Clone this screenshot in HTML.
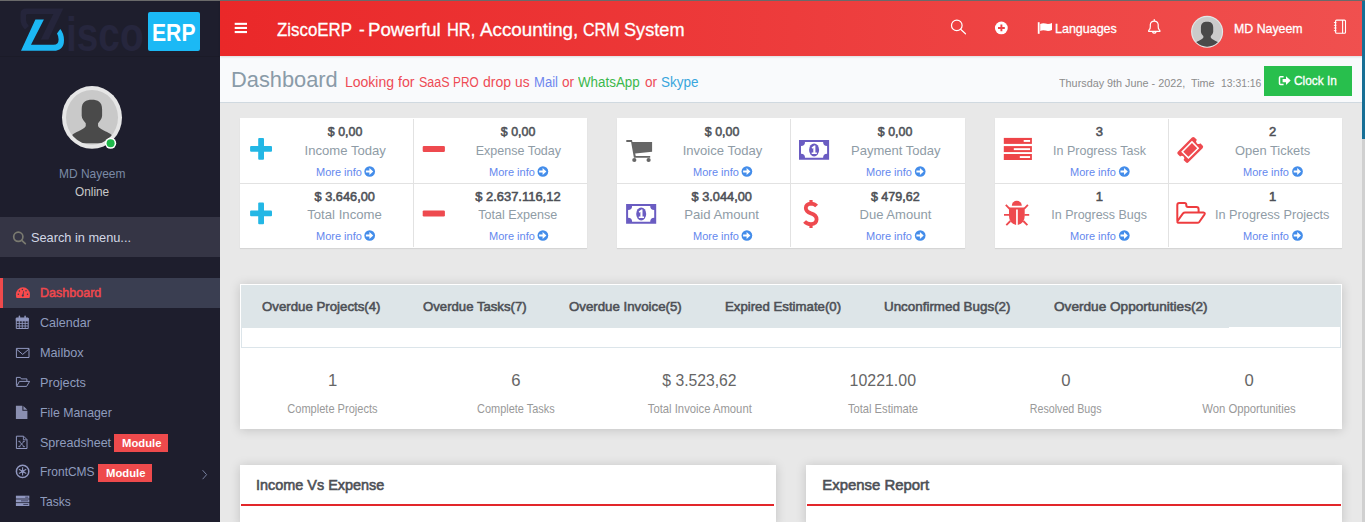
<!DOCTYPE html>
<html lang="en"><head><meta charset="utf-8"><title>ZiscoERP - Dashboard</title>
<style>
html,body{margin:0;padding:0}
body{width:1365px;height:522px;overflow:hidden;position:relative;background:#e8e8e8;font-family:"Liberation Sans",sans-serif}
.a{position:absolute}
.t{position:absolute;white-space:pre;line-height:1;font-family:"Liberation Sans",sans-serif}
svg{position:absolute;overflow:visible}
.card{background:#fff;box-shadow:0 1px 1px rgba(0,0,0,.08)}

</style></head>
<body>
<!-- layout blocks -->
<div class="a" style="left:0;top:0;width:220px;height:522px;background:#1e1e2d"></div>
<div class="a" style="left:0;top:56px;width:220px;height:1px;background:#1b1b28"></div>
<div class="a" style="left:220px;top:56px;width:1145px;height:46px;background:#f9fafc;border-bottom:1px solid #d0d9e0"></div>
<div class="a" style="left:220px;top:0;width:1145px;height:56px;background:linear-gradient(90deg,#ea2829 0%,#f0504f 100%);box-shadow:0 1px 2px rgba(0,0,0,.12)"></div>
<!-- sidebar -->
<div class="a" style="left:148px;top:12px;width:52px;height:38.5px;background:#1bb9f5;border-radius:2px"></div>
<div class="a" style="left:0;top:217px;width:220px;height:40px;background:#353545"></div>
<div class="a" style="left:0;top:278px;width:217px;height:30px;background:#3a3e51;border-left:3px solid #ee4a4c"></div>
<div class="a" style="left:114px;top:434px;width:54px;height:18px;background:#ee4a4c"></div>
<div class="a" style="left:98px;top:464px;width:54px;height:18px;background:#ee4a4c"></div>
<!-- cards -->
<div class="a card" style="left:240px;top:118px;width:347.3px;height:130px"></div>
<div class="a card" style="left:617.3px;top:118px;width:347.3px;height:130px"></div>
<div class="a card" style="left:994.7px;top:118px;width:347.3px;height:130px"></div>
<!-- tabs panel -->
<div class="a" style="left:240px;top:284px;width:1102px;height:145px;background:#fff;box-shadow:0 1px 10px rgba(0,0,0,.17)"></div>
<div class="a" style="left:241px;top:285px;width:1100px;height:42px;background:#dde5e8"></div>
<div class="a" style="left:241px;top:327px;width:988px;height:1px;background:#dde5e8"></div>
<div class="a" style="left:241px;top:327px;width:1098px;height:20px;border:1px solid #dce5ea;border-top:none"></div>
<!-- bottom panels -->
<div class="a" style="left:240px;top:465px;width:535.5px;height:60px;background:#fff;box-shadow:0 1px 10px rgba(0,0,0,.17)"></div>
<div class="a" style="left:241px;top:504px;width:533.3px;height:2px;background:#e2262a"></div>
<div class="a" style="left:805.5px;top:465px;width:536.5px;height:60px;background:#fff;box-shadow:0 1px 10px rgba(0,0,0,.17)"></div>
<div class="a" style="left:806.5px;top:504px;width:534.3px;height:2px;background:#e2262a"></div>
<!-- clock in -->
<div class="a" style="left:1264px;top:66px;width:88px;height:30px;background:#28bf4d"></div>
<!-- scrollbar -->
<div class="a" style="left:1362px;top:0;width:3px;height:522px;background:#d0d0d0"></div>
<div class="a" style="left:1362px;top:0;width:3px;height:139px;background:#176f96"></div>

<!-- card dividers -->
<div class="a" style="left:413.0px;top:119px;width:1px;height:128px;background:#e2e2e2"></div>
<div class="a" style="left:240.0px;top:183px;width:347.3px;height:1px;background:#e2e2e2"></div>
<div class="a" style="left:790.3px;top:119px;width:1px;height:128px;background:#e2e2e2"></div>
<div class="a" style="left:617.3px;top:183px;width:347.3px;height:1px;background:#e2e2e2"></div>
<div class="a" style="left:1167.7px;top:119px;width:1px;height:128px;background:#e2e2e2"></div>
<div class="a" style="left:994.7px;top:183px;width:347.3px;height:1px;background:#e2e2e2"></div>
<svg class="a" style="left:0;top:0" width="1365" height="522" viewBox="0 0 1365 522">
<!-- ===== logo Z ===== -->
<path d="M26 8.5 H63.3 L48.4 39.4 H40.9 L53.3 14 H27.5 Q26 14 26 15.5 V20 Q26 23 28.9 25.9 L25 29.4 Q20.5 25 20.5 20 V14 Q20.5 8.5 26 8.5 Z" fill="#25253b"/>
<path d="M35.4 19.4 H43.9 L31 44.8 H53.5 Q58.6 44.8 58.6 39.5 Q58.6 36 57 33.5 L60.3 28.9 Q64 33.5 64 40 Q64 50.8 53.5 50.8 H21 Z" fill="#1cb8f5"/>
<!-- ===== sidebar avatar ===== -->
<ellipse cx="92" cy="117.4" rx="30" ry="31.4" fill="#e6e6e6"/>
<ellipse cx="92" cy="117.4" rx="26" ry="27.4" fill="#c9c9c9"/>
<clipPath id="avc"><ellipse cx="92" cy="117.4" rx="26" ry="27.4"/></clipPath>
<g clip-path="url(#avc)" fill="#4a4a4a"><path transform="translate(91.9 99.7) scale(1.66)" d="M-6.15 5.7 C-6.15 1.2 -3.5 0 0 0 C3.5 0 6.15 1.2 6.15 5.7 L6.15 9.7 C6.15 11.7 4.5 13.2 3.7 14.2 L3.7 15.8 C4.5 17.7 9 19.2 11 20.5 C13 21.7 14 24.2 14.5 26.2 L-14.5 26.2 C-14 24.2 -13 21.7 -11 20.5 C-9 19.2 -4.5 17.7 -3.7 15.8 L-3.7 14.2 C-4.5 13.2 -6.15 11.7 -6.15 9.7 Z"/></g>
<circle cx="110.6" cy="143.2" r="5.6" fill="#ffffff"/>
<circle cx="110.6" cy="143.2" r="4" fill="#1fb84a"/>
<!-- search icon (sidebar) -->
<g fill="none" stroke="#7a7a70" stroke-width="1.7" stroke-linecap="round">
  <circle cx="18.3" cy="236.8" r="4.6"/>
  <path d="M21.7 240.3 L25.3 243.6"/>
</g>
<!-- ===== sidebar menu icons ===== -->
<!-- dashboard -->
<g>
  <path d="M16.6 298.1 Q15.9 296.6 15.9 294.4 A7.05 7.05 0 0 1 30 294.4 Q30 296.6 29.3 298.1 Z" fill="#f94a4c"/>
  <g fill="#383d4f">
    <circle cx="22.4" cy="289.6" r=".75"/><circle cx="19.4" cy="291" r=".75"/><circle cx="26" cy="290.8" r=".75"/>
    <circle cx="18.3" cy="294.3" r=".75"/><circle cx="27.5" cy="294.3" r=".75"/>
    <circle cx="22.8" cy="295.6" r="1.1"/>
    <path d="M22.5 295 L23.3 291 L23.9 291.1 L23.4 295.2 Z"/>
  </g>
</g>
<g fill="none" stroke="#9097bf" stroke-width="1">
  <!-- calendar -->
  <path d="M16.3 318.2 H28.2 V328.5 H16.3 Z"/>
  <path d="M16.3 320.8 H28.2 M16.3 323.4 H28.2 M16.3 326 H28.2 M19.3 320.8 V328.5 M22.25 320.8 V328.5 M25.2 320.8 V328.5" stroke-width=".9"/>
  <path d="M16.3 318.2 H28.2 V320.6 H16.3 Z" fill="#9097bf"/>
  <path d="M19.4 316.2 V319 M25.1 316.2 V319" stroke-width="1.5" stroke-linecap="round"/>
  <!-- mailbox -->
  <path d="M16.4 348.4 H29 V357.5 H16.4 Z"/>
  <path d="M16.6 349.2 L22.7 354.4 L28.8 349.2"/>
  <!-- projects (folder open o) -->
  <path d="M16.4 385.8 V377.4 H20.3 L21.3 378.9 H26.9 V381"/>
  <path d="M16.6 386.4 L19.4 381.4 H29.6 L26.6 386.4 Z"/>
  <!-- spreadsheet (file-excel-o) -->
  <path d="M16.4 436.2 H23.6 L27 439.6 V448.5 H16.4 Z"/>
  <path d="M23.4 436.4 V439.8 H26.8" stroke-width=".9"/>
  <path d="M19.2 441.4 L24 446.6 M24 441.4 L19.2 446.6 M18.4 441.3 H20.4 M22.8 441.3 H24.8 M18.4 446.7 H20.4 M22.8 446.7 H24.8" stroke-width=".9"/>
  <!-- frontcms (empire) -->
  <circle cx="22.6" cy="471.4" r="6.2" stroke-width="1.5"/>
  <path d="M22.6 467.2 V475.6 M18.95 469.3 L26.25 473.5 M18.95 473.5 L26.25 469.3" stroke-width="1.1"/>
  <!-- chevron -->
  <path d="M202.6 470.2 L206.6 474.7 L202.6 479.2" stroke="#77809f" stroke-width="1"/>
</g>
<circle cx="22.6" cy="471.4" r="1.6" fill="#9097bf"/>
<!-- file manager (filled file) -->
<path d="M15.9 405.8 H22.4 V410.8 H27.4 V418.9 H15.9 Z M23.4 405.9 L27.3 409.8 H23.4 Z" fill="#8a8fb0"/>
<!-- tasks -->
<g fill="#9097bf">
  <rect x="15.9" y="495.7" width="13.4" height="2.9"/>
  <rect x="15.9" y="499.4" width="13.4" height="2.9"/>
  <rect x="15.9" y="503.1" width="13.4" height="2.9"/>
</g>
<g fill="#3a3d5c">
  <rect x="25.2" y="496.7" width="3" height=".9"/>
  <rect x="21" y="500.4" width="7.2" height=".9"/>
  <rect x="23.3" y="504.1" width="4.9" height=".9"/>
</g>
<!-- ===== top bar icons ===== -->
<g fill="#ffffff">
  <rect x="234.7" y="22.8" width="12.3" height="2.1"/>
  <rect x="234.7" y="26.9" width="12.3" height="2.1"/>
  <rect x="234.7" y="31" width="12.3" height="2.1"/>
</g>
<g fill="none" stroke="#ffffff" stroke-width="1.2" stroke-linecap="round">
  <circle cx="956.8" cy="25.4" r="5.3"/>
  <path d="M960.6 29.3 L965.5 33.8"/>
</g>
<circle cx="1001.35" cy="27.95" r="6.4" fill="#ffffff"/>
<path d="M998 27.95 H1004.8 M1001.4 24.6 V31.3" stroke="#ee4245" stroke-width="1.9"/>
<!-- flag -->
<path d="M1037.8 22.2 H1039.6 V33.8 H1037.8 Z" fill="#ffffff"/>
<path d="M1040.2 23.9 Q1043 22.6 1045.5 23.6 Q1048.5 24.8 1052 23 V30 Q1048.5 31.8 1045.5 30.6 Q1043 29.6 1040.2 30.9 Z" fill="#ffffff"/>
<!-- bell -->
<g fill="none" stroke="#ffffff" stroke-width="1.2" stroke-linejoin="round" stroke-linecap="round">
  <path d="M1148.6 31.3 H1160 Q1160 30.2 1159 29.4 Q1158.2 28.6 1158.2 26.5 V24.5 A4 4 0 0 0 1150.3 24.5 V26.5 Q1150.3 28.6 1149.5 29.4 Q1148.6 30.2 1148.6 31.3 Z"/>
  <path d="M1152.6 32 A1.8 1.8 0 0 0 1156 32"/>
  <path d="M1154.3 19.6 V20.4"/>
</g>
<!-- top avatar -->
<circle cx="1207.1" cy="31.8" r="16" fill="#e3e8e8"/>
<circle cx="1207.1" cy="31.8" r="14.9" fill="#cbcbcb"/>
<clipPath id="avt"><circle cx="1207.1" cy="31.8" r="14.9"/></clipPath>
<g clip-path="url(#avt)" fill="#4a4a4a"><path transform="translate(1207.07 21.8)" d="M-6.15 5.7 C-6.15 1.2 -3.5 0 0 0 C3.5 0 6.15 1.2 6.15 5.7 L6.15 9.7 C6.15 11.7 4.5 13.2 3.7 14.2 L3.7 15.8 C4.5 17.7 9 19.2 11 20.5 C13 21.7 14 24.2 14.5 26.2 L-14.5 26.2 C-14 24.2 -13 21.7 -11 20.5 C-9 19.2 -4.5 17.7 -3.7 15.8 L-3.7 14.2 C-4.5 13.2 -6.15 11.7 -6.15 9.7 Z"/></g>
<!-- notebook -->
<g fill="none" stroke="#ffffff" stroke-width="1.1">
  <rect x="1335.6" y="20.1" width="9.9" height="13.1" rx="1"/>
  <path d="M1342.6 20.1 V33.2"/>
  <path d="M1333.9 22.6 H1336.4 M1333.9 25.3 H1336.4 M1333.9 28 H1336.4 M1333.9 30.7 H1336.4" stroke-width="1"/>
</g>
<!-- clock-in icon (sign-out) -->
<g fill="none" stroke="#ffffff" stroke-width="1.5">
  <path d="M1283.6 76.8 H1280.4 Q1279.5 76.8 1279.5 77.7 V83.5 Q1279.5 84.4 1280.4 84.4 H1283.6"/>
</g>
<path d="M1282.6 79 H1286 V76.3 L1290.7 80.6 L1286 84.9 V82.2 H1282.6 Z" fill="#ffffff"/>
<!-- ===== card icons ===== -->
<g fill="#23b7e5">
  <rect x="250.1" y="145.9" width="21.9" height="5.9" rx="1"/><rect x="258.2" y="138" width="5.8" height="21.8" rx="1"/>
  <rect x="250.1" y="210.4" width="21.9" height="5.9" rx="1"/><rect x="258.2" y="202.5" width="5.8" height="21.8" rx="1"/>
</g>
<g fill="#ee4a4f">
  <rect x="422.7" y="145.9" width="22.2" height="6.1" rx="1.2"/>
  <rect x="422.7" y="210.4" width="22.2" height="6.1" rx="1.2"/>
</g>
<!-- cart -->
<g fill="#666666">
  <path d="M626.3 140.1 H632 L632.4 142.1 H652.1 V151.8 L635.2 153.6 L635.7 156 H650.2 V157.8 H633.9 L631.1 142 H626.3 Z"/>
  <circle cx="634.3" cy="160" r="2.1"/><circle cx="648.6" cy="160" r="2.1"/>
</g>
<!-- money x2 -->
<g>
  <path fill="#6a5cc2" fill-rule="evenodd" d="M799 140 H829.1 V159.7 H799 Z M805 142 A4 4 0 0 1 801 146 V153.7 A4 4 0 0 1 805 157.7 H823.1 A4 4 0 0 1 827.1 153.7 V146 A4 4 0 0 1 823.1 142 Z"/>
  <ellipse cx="814.1" cy="149.9" rx="5" ry="6.5" fill="#6a5cc2"/>
  <path d="M811.6 147.5 L814.2 145.6 H815.4 V152.5 H816.9 V153.9 H811.7 V152.5 H813.3 V147.9 L812.2 148.7 Z" fill="#ffffff"/>
</g>
<g transform="translate(-172.9 64)">
  <path fill="#6a5cc2" fill-rule="evenodd" d="M799 140 H829.1 V159.7 H799 Z M805 142 A4 4 0 0 1 801 146 V153.7 A4 4 0 0 1 805 157.7 H823.1 A4 4 0 0 1 827.1 153.7 V146 A4 4 0 0 1 823.1 142 Z"/>
  <ellipse cx="814.1" cy="149.9" rx="5" ry="6.5" fill="#6a5cc2"/>
  <path d="M811.6 147.5 L814.2 145.6 H815.4 V152.5 H816.9 V153.9 H811.7 V152.5 H813.3 V147.9 L812.2 148.7 Z" fill="#ffffff"/>
</g>
<!-- dollar -->
<g fill="none" stroke="#ee4a4f" stroke-linecap="butt">
  <path d="M816.6 206 Q814.5 203.6 811 203.6 Q806 203.8 805.8 208 Q805.8 211.6 811 213.4 Q816.6 215.2 816.6 219.4 Q816.4 224 811 224.2 Q807 224.2 804.6 221.4" stroke-width="3.8"/>
  <path d="M811 200 V204 M811 223.8 V227.9" stroke-width="3.2"/>
</g>
<!-- tasks (card) -->
<g fill="#ee4448">
  <rect x="1003.8" y="137.9" width="28.1" height="6"/><rect x="1003.8" y="146.1" width="28.1" height="6"/><rect x="1003.8" y="154" width="28.1" height="6"/>
</g>
<g fill="#ffffff">
  <rect x="1023.7" y="140" width="6.4" height="1.9"/><rect x="1013.8" y="148.2" width="16.3" height="1.9"/><rect x="1019.8" y="156.1" width="10.3" height="1.9"/>
</g>
<!-- ticket -->
<g transform="translate(1190.2 149.9) rotate(-45)">
  <path fill="#ee4a4f" d="M-10 -7.5 H10 Q11.8 -7.5 11.8 -5.7 V-2.4 A2.4 2.4 0 0 0 11.8 2.4 V5.7 Q11.8 7.5 10 7.5 H-10 Q-11.8 7.5 -11.8 5.7 V2.4 A2.4 2.4 0 0 0 -11.8 -2.4 V-5.7 Q-11.8 -7.5 -10 -7.5 Z"/>
  <rect x="-6.9" y="-4.4" width="13.8" height="8.8" fill="none" stroke="#ffffff" stroke-width="1.5"/>
</g>
<!-- bug -->
<g fill="#ee4a4f">
  <path d="M1011.8 205.8 A5 5 0 0 1 1021.8 205.8 Z"/>
  <path d="M1009 207.5 H1024.7 V216 Q1024.7 223 1017.8 225 V209.5 H1016.1 V225 Q1009 223 1009 216 Z"/>
</g>
<g stroke="#ee4a4f" stroke-width="1.8" fill="none">
  <path d="M1005.8 204.8 L1009.6 208.8 M1004 214.8 H1009.4 M1006.3 225.2 L1010.4 221 M1027.9 204.8 L1024.1 208.8 M1029.2 214.8 H1024.3 M1027.4 225.2 L1023.3 221"/>
</g>
<!-- folder open (card) -->
<g fill="none" stroke="#ee3c3f" stroke-width="2" stroke-linejoin="round">
  <path d="M1177.3 220.8 V205 Q1177.3 203 1179.3 203 H1184.6 Q1186.3 203 1186.3 204.8 V205.3 Q1186.3 207 1188 207 H1196.4 Q1198.6 207 1198.6 209.2 V212"/>
  <path d="M1178.6 222.8 Q1176.6 222.6 1177.8 220.6 L1183 213.4 Q1183.8 212.4 1185 212.4 H1203.4 Q1205.6 212.6 1204.4 214.6 L1199.4 221.8 Q1198.6 222.8 1197.4 222.8 Z"/>
</g>
<!-- more info arrows -->
<g>
  <circle cx="369.7" cy="171.5" r="5.35" fill="#448dea"/>
  <path d="M365.9 170.55 H369.4 V168.1 L373.2 171.5 L369.4 174.9 V172.45 H365.9 Z" fill="#ffffff"/>
</g>
<g transform="translate(0 64)">
  <circle cx="369.7" cy="171.5" r="5.35" fill="#448dea"/>
  <path d="M365.9 170.55 H369.4 V168.1 L373.2 171.5 L369.4 174.9 V172.45 H365.9 Z" fill="#ffffff"/>
</g>
<g transform="translate(173.2 0)">
  <circle cx="369.7" cy="171.5" r="5.35" fill="#448dea"/>
  <path d="M365.9 170.55 H369.4 V168.1 L373.2 171.5 L369.4 174.9 V172.45 H365.9 Z" fill="#ffffff"/>
</g><g transform="translate(173.2 64)">
  <circle cx="369.7" cy="171.5" r="5.35" fill="#448dea"/>
  <path d="M365.9 170.55 H369.4 V168.1 L373.2 171.5 L369.4 174.9 V172.45 H365.9 Z" fill="#ffffff"/>
</g>
<g transform="translate(377.2 0)">
  <circle cx="369.7" cy="171.5" r="5.35" fill="#448dea"/>
  <path d="M365.9 170.55 H369.4 V168.1 L373.2 171.5 L369.4 174.9 V172.45 H365.9 Z" fill="#ffffff"/>
</g><g transform="translate(377.2 64)">
  <circle cx="369.7" cy="171.5" r="5.35" fill="#448dea"/>
  <path d="M365.9 170.55 H369.4 V168.1 L373.2 171.5 L369.4 174.9 V172.45 H365.9 Z" fill="#ffffff"/>
</g>
<g transform="translate(550.5 0)">
  <circle cx="369.7" cy="171.5" r="5.35" fill="#448dea"/>
  <path d="M365.9 170.55 H369.4 V168.1 L373.2 171.5 L369.4 174.9 V172.45 H365.9 Z" fill="#ffffff"/>
</g><g transform="translate(550.5 64)">
  <circle cx="369.7" cy="171.5" r="5.35" fill="#448dea"/>
  <path d="M365.9 170.55 H369.4 V168.1 L373.2 171.5 L369.4 174.9 V172.45 H365.9 Z" fill="#ffffff"/>
</g>
<g transform="translate(754.6 0)">
  <circle cx="369.7" cy="171.5" r="5.35" fill="#448dea"/>
  <path d="M365.9 170.55 H369.4 V168.1 L373.2 171.5 L369.4 174.9 V172.45 H365.9 Z" fill="#ffffff"/>
</g><g transform="translate(754.6 64)">
  <circle cx="369.7" cy="171.5" r="5.35" fill="#448dea"/>
  <path d="M365.9 170.55 H369.4 V168.1 L373.2 171.5 L369.4 174.9 V172.45 H365.9 Z" fill="#ffffff"/>
</g>
<g transform="translate(927.8 0)">
  <circle cx="369.7" cy="171.5" r="5.35" fill="#448dea"/>
  <path d="M365.9 170.55 H369.4 V168.1 L373.2 171.5 L369.4 174.9 V172.45 H365.9 Z" fill="#ffffff"/>
</g><g transform="translate(927.8 64)">
  <circle cx="369.7" cy="171.5" r="5.35" fill="#448dea"/>
  <path d="M365.9 170.55 H369.4 V168.1 L373.2 171.5 L369.4 174.9 V172.45 H365.9 Z" fill="#ffffff"/>
</g>
</svg>

<div class="a" style="left:0;top:0;width:1365px;height:1px;background:#6a6a6a"></div>


<div id="txt">
<span class="t" style="left:66.30px;top:11px;font-size:48px;color:#26263d;font-weight:700;transform:scaleX(0.8079);transform-origin:0 0;">isco</span>
<span class="t" style="left:152.30px;top:21px;font-size:24px;color:#ffffff;font-weight:700;transform:scaleX(0.8813);transform-origin:0 0;">ERP</span>
<span class="t" style="left:58.80px;top:167px;font-size:13px;color:#7b8aa5;transform:scaleX(0.9204);transform-origin:0 0;">MD Nayeem</span>
<span class="t" style="left:75.20px;top:186px;font-size:12.1px;color:#c9c9c9;transform:scaleX(0.9780);transform-origin:0 0;">Online</span>
<span class="t" style="left:31.40px;top:231px;font-size:13.5px;color:#d3d8e6;transform:scaleX(0.9451);transform-origin:0 0;">Search in menu...</span>
<span class="t" style="left:40.10px;top:286px;font-size:13px;color:#f0484d;-webkit-text-stroke:0.5px #f0484d;transform:scaleX(0.9637);transform-origin:0 0;">Dashboard</span>
<span class="t" style="left:39.80px;top:316px;font-size:13px;color:#8f9cbd;transform:scaleX(0.9646);transform-origin:0 0;">Calendar</span>
<span class="t" style="left:39.80px;top:346px;font-size:13px;color:#8f9cbd;transform:scaleX(0.9755);transform-origin:0 0;">Mailbox</span>
<span class="t" style="left:39.80px;top:376px;font-size:13px;color:#8f9cbd;transform:scaleX(0.9772);transform-origin:0 0;">Projects</span>
<span class="t" style="left:39.80px;top:406px;font-size:13px;color:#8f9cbd;transform:scaleX(0.9463);transform-origin:0 0;">File Manager</span>
<span class="t" style="left:39.80px;top:436px;font-size:13px;color:#8f9cbd;transform:scaleX(0.9643);transform-origin:0 0;">Spreadsheet</span>
<span class="t" style="left:39.80px;top:465px;font-size:13px;color:#8f9cbd;transform:scaleX(0.9218);transform-origin:0 0;">FrontCMS</span>
<span class="t" style="left:39.80px;top:495px;font-size:13px;color:#8f9cbd;transform:scaleX(0.9268);transform-origin:0 0;">Tasks</span>
<span class="t" style="left:121.70px;top:438px;font-size:11.2px;color:#ffffff;font-weight:700;transform:scaleX(1.0062);transform-origin:0 0;">Module</span>
<span class="t" style="left:105.50px;top:468px;font-size:11.2px;color:#ffffff;font-weight:700;transform:scaleX(1.0062);transform-origin:0 0;">Module</span>
<span class="t" style="left:277.30px;top:21px;font-size:18.6px;color:#ffffff;-webkit-text-stroke:0.3px #ffffff;transform:scaleX(0.9074);transform-origin:0 0;">ZiscoERP</span>
<span class="t" style="left:358.60px;top:21px;font-size:18.6px;color:#ffffff;-webkit-text-stroke:0.3px #ffffff;transform:scaleX(0.9189);transform-origin:0 0;">-</span>
<span class="t" style="left:368.30px;top:21px;font-size:18.6px;color:#ffffff;-webkit-text-stroke:0.3px #ffffff;transform:scaleX(1.0049);transform-origin:0 0;">Powerful</span>
<span class="t" style="left:446.70px;top:21px;font-size:18.6px;color:#ffffff;-webkit-text-stroke:0.3px #ffffff;transform:scaleX(0.8835);transform-origin:0 0;">HR,</span>
<span class="t" style="left:480.00px;top:21px;font-size:18.6px;color:#ffffff;-webkit-text-stroke:0.3px #ffffff;transform:scaleX(1.0116);transform-origin:0 0;">Accounting,</span>
<span class="t" style="left:582.70px;top:21px;font-size:18.6px;color:#ffffff;-webkit-text-stroke:0.3px #ffffff;transform:scaleX(0.8640);transform-origin:0 0;">CRM</span>
<span class="t" style="left:624.00px;top:21px;font-size:18.6px;color:#ffffff;-webkit-text-stroke:0.3px #ffffff;transform:scaleX(0.9758);transform-origin:0 0;">System</span>
<span class="t" style="left:1055.20px;top:22px;font-size:13.1px;color:#ffffff;-webkit-text-stroke:0.3px #ffffff;transform:scaleX(0.9535);transform-origin:0 0;">Languages</span>
<span class="t" style="left:1233.70px;top:22px;font-size:13.1px;color:#ffffff;-webkit-text-stroke:0.3px #ffffff;transform:scaleX(0.9428);transform-origin:0 0;">MD Nayeem</span>
<span class="t" style="left:231.00px;top:69px;font-size:22.3px;color:#8a9ba8;transform:scaleX(0.9781);transform-origin:0 0;">Dashboard</span>
<span class="t" style="left:345.00px;top:75px;font-size:14px;color:#ee4b55;">Looking</span>
<span class="t" style="left:397.70px;top:75px;font-size:14px;color:#ee4b55;transform:scaleX(1.0157);transform-origin:0 0;">for</span>
<span class="t" style="left:418.70px;top:75px;font-size:14px;color:#ee4b55;transform:scaleX(0.8934);transform-origin:0 0;">SaaS</span>
<span class="t" style="left:452.70px;top:75px;font-size:14px;color:#ee4b55;transform:scaleX(0.8437);transform-origin:0 0;">PRO</span>
<span class="t" style="left:482.70px;top:75px;font-size:14px;color:#ee4b55;transform:scaleX(0.9989);transform-origin:0 0;">drop</span>
<span class="t" style="left:514.70px;top:75px;font-size:14px;color:#ee4b55;transform:scaleX(0.9799);transform-origin:0 0;">us</span>
<span class="t" style="left:533.50px;top:75px;font-size:14px;color:#6f86ee;transform:scaleX(0.9349);transform-origin:0 0;">Mail</span>
<span class="t" style="left:562.00px;top:75px;font-size:14px;color:#ee4b55;transform:scaleX(0.9716);transform-origin:0 0;">or</span>
<span class="t" style="left:578.20px;top:75px;font-size:14px;color:#3cb84c;transform:scaleX(0.9552);transform-origin:0 0;">WhatsApp</span>
<span class="t" style="left:644.60px;top:75px;font-size:14px;color:#ee4b55;transform:scaleX(0.9716);transform-origin:0 0;">or</span>
<span class="t" style="left:661.20px;top:75px;font-size:14px;color:#3aa6dd;transform:scaleX(0.9609);transform-origin:0 0;">Skype</span>
<span class="t" style="left:1059.00px;top:77px;font-size:11.6px;color:#8c8c8c;transform:scaleX(0.9324);transform-origin:0 0;">Thursday 9th June - 2022,</span>
<span class="t" style="left:1191.40px;top:77px;font-size:11.6px;color:#8c8c8c;transform:scaleX(0.9312);transform-origin:0 0;">Time</span>
<span class="t" style="left:1221.00px;top:77px;font-size:11.6px;color:#8c8c8c;transform:scaleX(0.8950);transform-origin:0 0;">13:31:16</span>
<span class="t" style="left:1294.00px;top:74px;font-size:13px;color:#ffffff;-webkit-text-stroke:0.3px #ffffff;transform:scaleX(0.9155);transform-origin:0 0;">Clock In</span>
<span class="t" style="left:326.92px;top:125px;font-size:13px;color:#4d5056;-webkit-text-stroke:0.55px #4d5056;transform:scaleX(0.9542);transform-origin:18.08px 0;">$ 0,00</span>
<span class="t" style="left:302.80px;top:144px;font-size:13.6px;color:#8f9ca6;transform:scaleX(0.9634);transform-origin:42.20px 0;">Income Today</span>
<span class="t" style="left:315.57px;top:167px;font-size:11px;color:#6488ee;transform:scaleX(0.9987);transform-origin:22.93px 0;">More info</span>
<span class="t" style="left:314.27px;top:190px;font-size:13px;color:#4d5056;-webkit-text-stroke:0.55px #4d5056;transform:scaleX(0.9829);transform-origin:30.73px 0;">$ 3.646,00</span>
<span class="t" style="left:306.46px;top:208px;font-size:13.6px;color:#8f9ca6;transform:scaleX(0.9691);transform-origin:38.54px 0;">Total Income</span>
<span class="t" style="left:315.57px;top:231px;font-size:11px;color:#6488ee;transform:scaleX(0.9987);transform-origin:22.93px 0;">More info</span>
<span class="t" style="left:499.92px;top:125px;font-size:13px;color:#4d5056;-webkit-text-stroke:0.55px #4d5056;transform:scaleX(0.9542);transform-origin:18.08px 0;">$ 0,00</span>
<span class="t" style="left:471.64px;top:144px;font-size:13.6px;color:#8f9ca6;transform:scaleX(0.9211);transform-origin:46.36px 0;">Expense Today</span>
<span class="t" style="left:488.57px;top:167px;font-size:11px;color:#6488ee;transform:scaleX(0.9987);transform-origin:22.93px 0;">More info</span>
<span class="t" style="left:475.10px;top:190px;font-size:13px;color:#4d5056;-webkit-text-stroke:0.55px #4d5056;transform:scaleX(0.9954);transform-origin:42.90px 0;">$ 2.637.116,12</span>
<span class="t" style="left:475.30px;top:208px;font-size:13.6px;color:#8f9ca6;transform:scaleX(0.9262);transform-origin:42.70px 0;">Total Expense</span>
<span class="t" style="left:488.57px;top:231px;font-size:11px;color:#6488ee;transform:scaleX(0.9987);transform-origin:22.93px 0;">More info</span>
<span class="t" style="left:703.92px;top:125px;font-size:13px;color:#4d5056;-webkit-text-stroke:0.55px #4d5056;transform:scaleX(0.9542);transform-origin:18.08px 0;">$ 0,00</span>
<span class="t" style="left:680.55px;top:144px;font-size:13.6px;color:#8f9ca6;transform:scaleX(0.9603);transform-origin:41.45px 0;">Invoice Today</span>
<span class="t" style="left:692.57px;top:167px;font-size:11px;color:#6488ee;transform:scaleX(0.9987);transform-origin:22.93px 0;">More info</span>
<span class="t" style="left:691.27px;top:190px;font-size:13px;color:#4d5056;-webkit-text-stroke:0.55px #4d5056;transform:scaleX(0.9829);transform-origin:30.73px 0;">$ 3.044,00</span>
<span class="t" style="left:683.45px;top:208px;font-size:13.6px;color:#8f9ca6;transform:scaleX(0.9690);transform-origin:38.55px 0;">Paid Amount</span>
<span class="t" style="left:692.57px;top:231px;font-size:11px;color:#6488ee;transform:scaleX(0.9987);transform-origin:22.93px 0;">More info</span>
<span class="t" style="left:877.22px;top:125px;font-size:13px;color:#4d5056;-webkit-text-stroke:0.55px #4d5056;transform:scaleX(0.9542);transform-origin:18.08px 0;">$ 0,00</span>
<span class="t" style="left:848.57px;top:144px;font-size:13.6px;color:#8f9ca6;transform:scaleX(0.9566);transform-origin:46.73px 0;">Payment Today</span>
<span class="t" style="left:865.87px;top:167px;font-size:11px;color:#6488ee;transform:scaleX(0.9987);transform-origin:22.93px 0;">More info</span>
<span class="t" style="left:870.00px;top:190px;font-size:13px;color:#4d5056;-webkit-text-stroke:0.55px #4d5056;transform:scaleX(0.9642);transform-origin:25.30px 0;">$ 479,62</span>
<span class="t" style="left:857.89px;top:208px;font-size:13.6px;color:#8f9ca6;transform:scaleX(0.9597);transform-origin:37.41px 0;">Due Amount</span>
<span class="t" style="left:865.87px;top:231px;font-size:11px;color:#6488ee;transform:scaleX(0.9987);transform-origin:22.93px 0;">More info</span>
<span class="t" style="left:1095.68px;top:125px;font-size:13px;color:#4d5056;-webkit-text-stroke:0.55px #4d5056;">3</span>
<span class="t" style="left:1048.80px;top:144px;font-size:13.6px;color:#8f9ca6;transform:scaleX(0.9188);transform-origin:50.50px 0;">In Progress Task</span>
<span class="t" style="left:1069.87px;top:167px;font-size:11px;color:#6488ee;transform:scaleX(0.9987);transform-origin:22.93px 0;">More info</span>
<span class="t" style="left:1095.68px;top:190px;font-size:13px;color:#4d5056;-webkit-text-stroke:0.55px #4d5056;">1</span>
<span class="t" style="left:1047.16px;top:208px;font-size:13.6px;color:#8f9ca6;transform:scaleX(0.9177);transform-origin:52.14px 0;">In Progress Bugs</span>
<span class="t" style="left:1069.87px;top:231px;font-size:11px;color:#6488ee;transform:scaleX(0.9987);transform-origin:22.93px 0;">More info</span>
<span class="t" style="left:1268.88px;top:125px;font-size:13px;color:#4d5056;-webkit-text-stroke:0.55px #4d5056;">2</span>
<span class="t" style="left:1232.83px;top:144px;font-size:13.6px;color:#8f9ca6;transform:scaleX(0.9490);transform-origin:39.67px 0;">Open Tickets</span>
<span class="t" style="left:1243.07px;top:167px;font-size:11px;color:#6488ee;transform:scaleX(0.9987);transform-origin:22.93px 0;">More info</span>
<span class="t" style="left:1268.88px;top:190px;font-size:13px;color:#4d5056;-webkit-text-stroke:0.55px #4d5056;">1</span>
<span class="t" style="left:1211.30px;top:208px;font-size:13.6px;color:#8f9ca6;transform:scaleX(0.9347);transform-origin:61.20px 0;">In Progress Projects</span>
<span class="t" style="left:1243.07px;top:231px;font-size:11px;color:#6488ee;transform:scaleX(0.9987);transform-origin:22.93px 0;">More info</span>
<span class="t" style="left:262.40px;top:300px;font-size:13px;color:#4d5056;-webkit-text-stroke:0.55px #4d5056;transform:scaleX(1.0187);transform-origin:0 0;">Overdue Projects(4)</span>
<span class="t" style="left:423.30px;top:300px;font-size:13px;color:#4d5056;-webkit-text-stroke:0.55px #4d5056;transform:scaleX(1.0121);transform-origin:0 0;">Overdue Tasks(7)</span>
<span class="t" style="left:569.00px;top:300px;font-size:13px;color:#4d5056;-webkit-text-stroke:0.55px #4d5056;transform:scaleX(1.0202);transform-origin:0 0;">Overdue Invoice(5)</span>
<span class="t" style="left:724.80px;top:300px;font-size:13px;color:#4d5056;-webkit-text-stroke:0.55px #4d5056;transform:scaleX(1.0170);transform-origin:0 0;">Expired Estimate(0)</span>
<span class="t" style="left:883.90px;top:300px;font-size:13px;color:#4d5056;-webkit-text-stroke:0.55px #4d5056;transform:scaleX(1.0299);transform-origin:0 0;">Unconfirmed Bugs(2)</span>
<span class="t" style="left:1053.50px;top:300px;font-size:13px;color:#4d5056;-webkit-text-stroke:0.55px #4d5056;transform:scaleX(1.0471);transform-origin:0 0;">Overdue Opportunities(2)</span>
<span class="t" style="left:328.06px;top:373px;font-size:16.7px;color:#666666;">1</span>
<span class="t" style="left:511.36px;top:373px;font-size:16.7px;color:#666666;">6</span>
<span class="t" style="left:659.96px;top:373px;font-size:16.7px;color:#666666;transform:scaleX(0.9420);transform-origin:39.44px 0;">$ 3.523,62</span>
<span class="t" style="left:848.00px;top:373px;font-size:16.7px;color:#666666;transform:scaleX(0.9539);transform-origin:34.80px 0;">10221.00</span>
<span class="t" style="left:1061.36px;top:373px;font-size:16.7px;color:#666666;">0</span>
<span class="t" style="left:1244.56px;top:373px;font-size:16.7px;color:#666666;">0</span>
<span class="t" style="left:283.29px;top:403px;font-size:12.1px;color:#999999;transform:scaleX(0.9128);transform-origin:49.41px 0;">Complete Projects</span>
<span class="t" style="left:473.09px;top:403px;font-size:12.1px;color:#999999;transform:scaleX(0.9041);transform-origin:42.91px 0;">Complete Tasks</span>
<span class="t" style="left:643.60px;top:403px;font-size:12.1px;color:#999999;transform:scaleX(0.9318);transform-origin:55.80px 0;">Total Invoice Amount</span>
<span class="t" style="left:844.82px;top:403px;font-size:12.1px;color:#999999;transform:scaleX(0.9243);transform-origin:37.98px 0;">Total Estimate</span>
<span class="t" style="left:1025.33px;top:403px;font-size:12.1px;color:#999999;transform:scaleX(0.8827);transform-origin:40.67px 0;">Resolved Bugs</span>
<span class="t" style="left:1199.22px;top:403px;font-size:12.1px;color:#999999;transform:scaleX(0.9354);transform-origin:49.98px 0;">Won Opportunities</span>
<span class="t" style="left:256.40px;top:478px;font-size:14.9px;color:#4d5056;-webkit-text-stroke:0.6px #4d5056;transform:scaleX(0.9688);transform-origin:0 0;">Income Vs Expense</span>
<span class="t" style="left:822.30px;top:478px;font-size:14.9px;color:#4d5056;-webkit-text-stroke:0.6px #4d5056;">Expense Report</span>
</div>
</body></html>
